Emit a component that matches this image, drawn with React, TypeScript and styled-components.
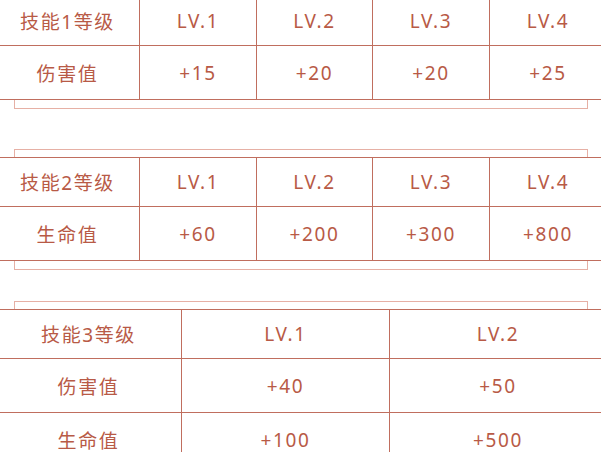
import { Fragment } from "react";
import { createGlobalStyle, styled } from "styled-components";

const GlobalStyle = createGlobalStyle`
  html, body {
    margin: 0;
    padding: 0;
    background: #ffffff;
    overflow: hidden;
  }
  body {
    font-family: "Noto Sans", "Noto Sans CJK SC", sans-serif;
  }
`;

const Page = styled.div`
  width: 601px;
  height: 456px;
  overflow: hidden;
  display: flex;
  flex-direction: column;
  margin-top: -4px;
`;

const Section = styled.div<{ $gap: number }>`
  display: flex;
  flex-direction: column;
  margin-bottom: ${(p) => p.$gap}px;
`;

const FrameTop = styled.div`
  height: 7px;
  margin: 0 13px 0 14px;
  border: 1px solid #e6b0a5;
  border-bottom: 0;
`;

const FrameBottom = styled.div`
  height: 8px;
  margin: 0 13px 0 14px;
  border: 1px solid #e6b0a5;
  border-top: 0;
`;

const Table = styled.div<{ $cols: string }>`
  display: grid;
  grid-template-columns: ${(p) => p.$cols};
  grid-auto-rows: 53px;
  grid-template-rows: 48px;
  gap: 1px;
  padding: 1px;
  background: #c06e5e;
  width: 612px;
  margin-left: -5px;
  box-sizing: border-box;
`;

const Cell = styled.div`
  background: #ffffff;
  display: flex;
  align-items: center;
  justify-content: center;
  color: #b85a46;
  font-size: 19px;
  letter-spacing: 1.6px;
  white-space: nowrap;
`;

type Skill = {
  title: string;
  levels: string[];
  rows: { label: string; values: string[] }[];
  cols: string;
};

const skills: Skill[] = [
  {
    title: "技能1等级",
    levels: ["LV.1", "LV.2", "LV.3", "LV.4"],
    rows: [{ label: "伤害值", values: ["+15", "+20", "+20", "+25"] }],
    cols: "143px 116px 115px 116px 1fr",
  },
  {
    title: "技能2等级",
    levels: ["LV.1", "LV.2", "LV.3", "LV.4"],
    rows: [{ label: "生命值", values: ["+60", "+200", "+300", "+800"] }],
    cols: "143px 116px 115px 116px 1fr",
  },
  {
    title: "技能3等级",
    levels: ["LV.1", "LV.2"],
    rows: [
      { label: "伤害值", values: ["+40", "+50"] },
      { label: "生命值", values: ["+100", "+500"] },
    ],
    cols: "185px 207px 1fr",
  },
];

export default function App() {
  return (
    <>
      <GlobalStyle />
      <Page>
        {skills.map((skill, i) => (
          <Section key={skill.title} $gap={i === 0 ? 40 : 31}>
            {i > 0 && <FrameTop />}
            <Table $cols={skill.cols}>
              <Cell>{skill.title}</Cell>
              {skill.levels.map((lv) => (
                <Cell key={lv}>{lv}</Cell>
              ))}
              {skill.rows.map((row) => (
                <Fragment key={row.label}>
                  <Cell>{row.label}</Cell>
                  {row.values.map((v, j) => (
                    <Cell key={j}>{v}</Cell>
                  ))}
                </Fragment>
              ))}
            </Table>
            <FrameBottom />
          </Section>
        ))}
      </Page>
    </>
  );
}
